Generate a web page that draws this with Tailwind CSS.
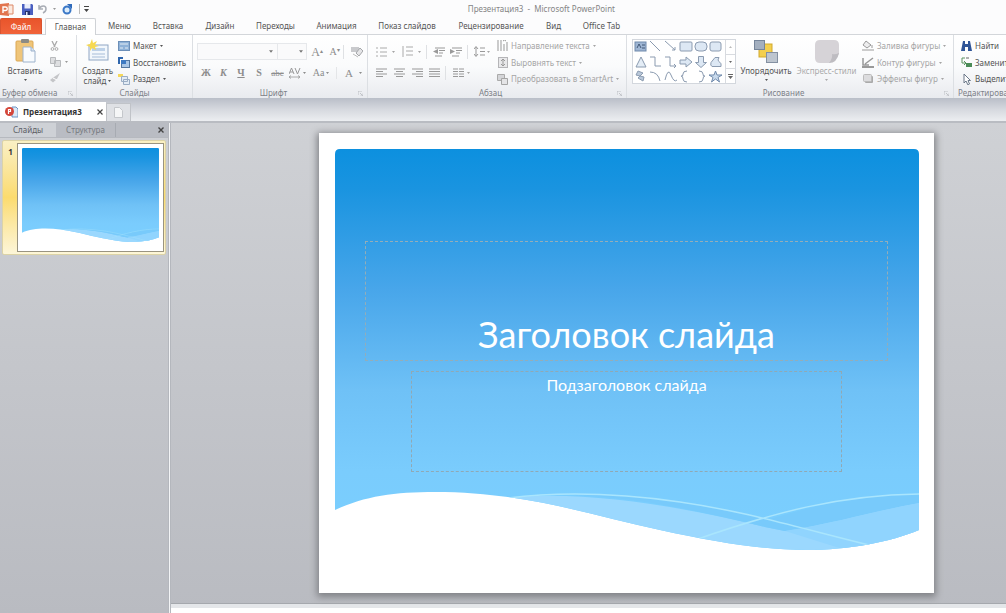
<!DOCTYPE html>
<html lang="ru">
<head>
<meta charset="utf-8">
<title>Презентация3 - Microsoft PowerPoint</title>
<script src="https://cdn.jsdelivr.net/npm/@tailwindcss/browser@4"></script>
</head>
<body class="min-h-screen flex flex-col overflow-x-hidden bg-[#c5c8ce] font-['Noto_Sans',sans-serif] text-[8px] leading-[10px] text-[#555]">

<header class="bg-[#fcfcfd]">
  <div class="flex h-[18px] items-center">
    <div class="flex flex-1 items-center">
      <svg class="h-[13px] w-[14px]" viewBox="0 0 14 13"><path d="M0 1l9-1v13l-9-1z" fill="#e2744e"/><path d="M8 2h5v9H8z" fill="#fbe9df" stroke="#dc8868"/><path d="M3 10V4h2.500a1.700 1.700 0 010 3.500H3" fill="none" stroke="#fff" stroke-width="1.400"/></svg>
      <button class="ml-[8px]" aria-label="Сохранить"><svg class="size-[11px]" viewBox="0 0 11 11"><path d="M0 0h10l1 1v10H0z" fill="#4a5fc0"/><path d="M2.500 0h6v4.500h-6z" fill="#e9edfa"/><path d="M3 7h5v4H3z" fill="#26336f"/><path d="M4 8h1.500v3H4z" fill="#dfe5f7"/></svg></button>
      <button class="ml-[5px] flex items-center gap-[5px]" aria-label="Отменить"><svg class="size-[10px]" viewBox="0 0 10 10"><path d="M1 1v4h4M1 5c2-4 7-4 7 0 0 2-1 3-3 4" fill="none" stroke="#a9adb5" stroke-width="1.500"/></svg><svg class="h-[2px] w-[3px]" viewBox="0 0 3 2"><path d="M0 0h3L1.500 2z" fill="#999"/></svg></button>
      <button class="ml-[6px]" aria-label="Повторить"><svg class="size-[11px]" viewBox="0 0 11 11"><circle cx="5" cy="6" r="3.500" fill="#dcecfb" stroke="#3b78c7" stroke-width="2"/><path d="M5 0h5v5z" fill="#2f6abb"/></svg></button>
      <span class="ml-[6px] h-[10px] w-px bg-[#bbb]"></span>
      <button class="ml-[4px]" aria-label="Настройка панели"><svg class="h-[6px] w-[5px]" viewBox="0 0 5 6"><path d="M0 0h5v1H0zM0 3h5L2.500 6z" fill="#444"/></svg></button>
    </div>
    <h1 class="text-[#858585]">Презентация3 &nbsp;-&nbsp; Microsoft PowerPoint</h1>
    <div class="w-[391px]"></div>
  </div>
  <nav class="flex h-[17px] items-stretch whitespace-nowrap border-b border-[#d3d6da]">
    <button class="w-[42px] rounded-t-[2px] border border-b-0 border-[#d9532f] bg-linear-to-b from-[#e9552b] to-[#f0633a] text-white">Файл</button>
    <button class="-mb-px ml-[3px] mr-[2px] w-[51px] rounded-t-[2px] border border-b-0 border-[#cfd2d6] bg-white">Главная</button>
    <button class="w-[43px]">Меню</button>
    <button class="w-[54px]">Вставка</button>
    <button class="w-[50px]">Дизайн</button>
    <button class="w-[61px]">Переходы</button>
    <button class="w-[61px]">Анимация</button>
    <button class="w-[80px]">Показ слайдов</button>
    <button class="w-[88px]">Рецензирование</button>
    <button class="w-[37px]">Вид</button>
    <button class="w-[59px]">Office Tab</button>
  </nav>
</header>

<svg class="hidden">
  <symbol id="dd" viewBox="0 0 3 2"><path d="M0 0h3L1.500 2z" fill="currentColor"/></symbol>
  <symbol id="launch" viewBox="0 0 5 5"><path d="M0 4V0h4M2 2l2.500 2.500M5 2.500V5H2.500" fill="none" stroke="#b5b8bd" stroke-width=".8"/></symbol>
</svg>

<section class="flex h-[63px] overflow-hidden whitespace-nowrap bg-linear-to-b from-white via-[#fafbfc] to-[#e9ebef]" aria-label="Лента">
  <div class="flex w-[77px] shrink-0 flex-col border-r border-[#dcdfe3] pt-[2px]">
    <div class="flex h-[51px]">
      <button class="flex w-[50px] flex-col items-center">
        <svg class="mt-[2px] h-[24px] w-[21px]" viewBox="0 0 21 24"><rect x="1" y="2" width="17" height="20" rx="1" fill="#efc579" stroke="#dca854"/><rect x="6" y="0" width="8" height="4" rx="1" fill="#8b8b85"/><path d="M8 8h8l4 4v11H8z" fill="#f8fbfe" stroke="#9db2cc"/><path d="M16 8v4h4" fill="#d7e3f0" stroke="#9db2cc"/></svg>
        <span class="mt-[3px]">Вставить</span>
        <svg class="mt-[3px] h-[2px] w-[3px]"><use href="#dd"/></svg>
      </button>
      <div class="flex flex-col text-[#999]">
        <button class="flex h-[17px] items-center" aria-label="Вырезать"><svg class="h-[10px] w-[9px]" viewBox="0 0 9 10"><path d="M2 0l3 6M7 0L4 6" stroke="#aaa" stroke-width="1.300"/><circle cx="2.500" cy="8" r="1.400" fill="none" stroke="#aaa"/><circle cx="6.500" cy="8" r="1.400" fill="none" stroke="#aaa"/></svg></button>
        <button class="flex h-[16px] items-center gap-[4px]" aria-label="Копировать"><svg class="h-[10px] w-[11px]" viewBox="0 0 11 10"><path d="M.5.5h5v6h-5zM4.500 3.500h6v6h-6z" fill="#dedfe1" stroke="#b8babd"/></svg><svg class="h-[2px] w-[3px]"><use href="#dd"/></svg></button>
        <button class="flex h-[16px] items-center" aria-label="Формат по образцу"><svg class="h-[10px] w-[11px]" viewBox="0 0 11 10"><path d="M10 0L7 6 3 9.500 0 7l4-3z" fill="#c4c5c8"/><path d="M3 5l4 2" stroke="#fff"/></svg></button>
      </div>
    </div>
    <div class="flex items-center justify-between pl-[2px] pr-[3px] text-[#7d8188]"><span>Буфер обмена</span><svg class="size-[5px]"><use href="#launch"/></svg></div>
  </div>

  <div class="flex w-[116px] shrink-0 flex-col border-r border-[#dcdfe3] pt-[2px]">
    <div class="flex h-[51px]">
      <button class="flex w-[41px] flex-col items-center">
        <svg class="mt-[2px] h-[24px] w-[24px]" viewBox="0 0 24 24"><rect x="3" y="6" width="19" height="15" fill="#f2f7fc" stroke="#8fa6c4"/><path d="M6 9h13v3H6z" fill="#bdd1e8"/><path d="M6 15h13M6 18h13" stroke="#a7bdd8"/><path d="M6 0l1 4 4-2-2 4 4 1-4 1 1 3-4-2-2 3V8L0 6l4-1z" fill="#f7d951"/></svg>
        <span class="mt-[3px]">Создать</span>
        <span class="flex items-center gap-[2px]">слайд<svg class="h-[2px] w-[3px]"><use href="#dd"/></svg></span>
      </button>
      <div class="flex flex-col">
        <button class="flex h-[17px] items-center gap-[3px]"><svg class="h-[10px] w-[12px]" viewBox="0 0 12 10"><rect x=".5" y=".5" width="11" height="9" fill="#8fb2d8" stroke="#6c8fb8"/><path d="M2 2h8v2H2zM2 6h3v2H2zM7 6h3v2H7z" fill="#b9cfe6"/></svg>Макет<svg class="h-[2px] w-[3px]"><use href="#dd"/></svg></button>
        <button class="flex h-[17px] items-center gap-[3px]"><svg class="h-[11px] w-[12px]" viewBox="0 0 12 11"><rect x="3.500" y="3.500" width="8" height="7" fill="#a9c6e6" stroke="#54779f"/><path d="M0 0h5v2H2v5H0z" fill="#2f66ad"/><path d="M3 3h5v4H3z" fill="#3e7ac2"/></svg>Восстановить</button>
        <button class="flex h-[16px] items-center gap-[3px]"><svg class="h-[11px] w-[12px]" viewBox="0 0 12 11"><path d="M0 0h5v3H0z" fill="#f5d85b"/><path d="M3.500 2.500h6v5h-6zM5.500 5.500h6v5h-6z" fill="#e3ebf4" stroke="#9badc4"/></svg>Раздел<svg class="h-[2px] w-[3px]"><use href="#dd"/></svg></button>
      </div>
    </div>
    <div class="text-center text-[#7d8188]">Слайды</div>
  </div>

  <div class="flex w-[175px] shrink-0 flex-col border-r border-[#dcdfe3] pt-[2px]">
    <div class="flex h-[51px] flex-col gap-[4px] pl-[4px] pt-[6px] text-[#8d8d8d]">
      <div class="flex h-[17px] items-center">
        <div class="flex h-full w-[81px] items-center border border-[#e6e8eb] bg-[#fafafb] pr-[4px]"><select aria-label="Шрифт" class="h-full min-w-0 flex-1 appearance-none"><option></option></select><svg class="h-[3px] w-[4px]" viewBox="0 0 3 2"><path d="M0 0h3L1.500 2z" fill="#777"/></svg></div>
        <div class="flex h-full w-[29px] items-center border border-l-0 border-[#e6e8eb] bg-[#fafafb] pr-[3px]"><select aria-label="Размер" class="h-full min-w-0 flex-1 appearance-none"><option></option></select><svg class="h-[3px] w-[4px]" viewBox="0 0 3 2"><path d="M0 0h3L1.500 2z" fill="#777"/></svg></div>
        <button class="ml-[4px] w-[12px] font-['Liberation_Serif',serif] text-[12px]" aria-label="Увеличить шрифт">A<sup class="text-[6px]">▴</sup></button>
        <button class="ml-[6px] w-[11px] font-['Liberation_Serif',serif] text-[10px]" aria-label="Уменьшить шрифт">A<sup class="text-[6px]">▾</sup></button>
        <span class="ml-[3px] h-[14px] w-px bg-[#dfe1e4]"></span>
        <button class="ml-[7px]" aria-label="Очистить формат"><svg class="h-[12px] w-[12px]" viewBox="0 0 12 12"><path d="M0 1h8v5H0z" fill="#c9cacd"/><path d="M5 7l4-5 3 3-4 5z" fill="#e5e5e7" stroke="#a4a6a9"/><path d="M2 8l5 3" stroke="#bbb"/></svg></button>
      </div>
      <div class="flex h-[17px] items-center font-['Liberation_Serif',serif] text-[10px]">
        <button class="w-[18px] font-bold">Ж</button>
        <button class="w-[17px] font-bold italic">К</button>
        <button class="w-[18px] font-bold underline">Ч</button>
        <button class="w-[18px] font-bold">S</button>
        <button class="w-[19px] text-[9px] line-through">abc</button>
        <button class="flex w-[21px] items-center justify-center gap-[2px]" aria-label="Интервал"><svg class="h-[12px] w-[12px]" viewBox="0 0 12 12"><path d="M0 7l2.500-6L5 7M1 5h3M6 1l2.500 6L11 1" fill="none" stroke="#999"/><path d="M0 10h11M2 8.500L0 10l2 1.500M9 8.500l2 1.500-2 1.500" fill="none" stroke="#999" stroke-width=".8"/></svg><svg class="h-[2px] w-[3px]"><use href="#dd"/></svg></button>
        <button class="flex w-[26px] items-center justify-center gap-[2px]">Aa<svg class="h-[2px] w-[3px]"><use href="#dd"/></svg></button>
        <span class="ml-[2px] h-[12px] w-px bg-[#e4e6e8]"></span>
        <button class="ml-[8px] flex items-center gap-[6px] text-[11px]">A<svg class="h-[2px] w-[3px]"><use href="#dd"/></svg></button>
      </div>
    </div>
    <div class="flex items-center pr-[4px] text-[#7d8188]"><span class="flex-1 pr-[4px] text-center">Шрифт</span><svg class="size-[5px]"><use href="#launch"/></svg></div>
  </div>

  <div class="flex w-[259px] shrink-0 flex-col border-r border-[#dcdfe3] pt-[2px]">
    <div class="flex h-[51px] text-[#a5a5a5]">
      <div class="flex w-[129px] flex-col gap-[4px] pl-[8px] pt-[6px]">
        <div class="flex h-[17px] items-center">
          <button class="flex w-[26px] items-center gap-[5px]" aria-label="Маркеры"><svg class="h-[10px] w-[11px]" viewBox="0 0 11 10"><path d="M0 1h2M0 5h2M0 9h2M4 1h7M4 5h7M4 9h7" stroke="#aaa"/></svg><svg class="h-[2px] w-[3px]"><use href="#dd"/></svg></button>
          <button class="flex w-[24px] items-center gap-[5px]" aria-label="Нумерация"><svg class="h-[11px] w-[11px]" viewBox="0 0 11 11"><path d="M1 0v11M4 1h7M4 5h7M4 9h7" stroke="#aaa"/></svg><svg class="h-[2px] w-[3px]"><use href="#dd"/></svg></button>
          <span class="h-[14px] w-px bg-[#dfe1e4]"></span>
          <button class="ml-[6px]" aria-label="Уменьшить отступ"><svg class="h-[10px] w-[12px]" viewBox="0 0 12 10"><path d="M2 1h10M6 3.500h6M6 6h4M2 9h7" stroke="#999"/><path d="M5 2v5L0 4.500z" fill="#999"/></svg></button>
          <button class="ml-[5px]" aria-label="Увеличить отступ"><svg class="h-[10px] w-[12px]" viewBox="0 0 12 10"><path d="M2 1h10M6 3.500h6M6 6h4M2 9h7" stroke="#999"/><path d="M0 2v5l5-2.500z" fill="#999"/></svg></button>
          <span class="ml-[5px] h-[14px] w-px bg-[#dfe1e4]"></span>
          <button class="ml-[6px] flex items-center gap-[2px]" aria-label="Междустрочный интервал"><svg class="h-[11px] w-[11px]" viewBox="0 0 11 11"><path d="M2 1v9M0 3l2-2.500L4 3M0 8l2 2.500L4 8M6 2h5M6 5.500h5M6 9h5" fill="none" stroke="#999"/></svg><svg class="h-[2px] w-[3px]"><use href="#dd"/></svg></button>
        </div>
        <div class="flex h-[17px] items-center">
          <button class="w-[18px]" aria-label="По левому краю"><svg class="h-[9px] w-[11px]" viewBox="0 0 11 9"><path d="M0 1h11M0 3.500h7M0 6h11M0 8.500h7" stroke="#999"/></svg></button>
          <button class="w-[18px]" aria-label="По центру"><svg class="h-[9px] w-[11px]" viewBox="0 0 11 9"><path d="M0 1h11M2 3.500h7M0 6h11M2 8.500h7" stroke="#999"/></svg></button>
          <button class="w-[17px]" aria-label="По правому краю"><svg class="h-[9px] w-[11px]" viewBox="0 0 11 9"><path d="M0 1h11M4 3.500h7M0 6h11M4 8.500h7" stroke="#999"/></svg></button>
          <button class="w-[16px]" aria-label="По ширине"><svg class="h-[9px] w-[11px]" viewBox="0 0 11 9"><path d="M0 1h11M0 3.500h11M0 6h11M0 8.500h11" stroke="#999"/></svg></button>
          <span class="h-[14px] w-px bg-[#dfe1e4]"></span>
          <button class="ml-[7px] flex items-center gap-[3px]" aria-label="Колонки"><svg class="h-[9px] w-[11px]" viewBox="0 0 11 9"><path d="M0 1h5M0 3.500h5M0 6h5M0 8.500h5M6 1h5M6 3.500h5M6 6h5M6 8.500h5" stroke="#999"/></svg><svg class="h-[2px] w-[3px]"><use href="#dd"/></svg></button>
        </div>
      </div>
      <div class="flex flex-col">
        <button class="flex h-[17px] items-center gap-[3px]"><svg class="h-[11px] w-[11px]" viewBox="0 0 11 11"><path d="M1 0v11M4 0v11M7 4v7M10 2v9M6 1l1.500-1L9 1" fill="none" stroke="#999"/></svg>Направление текста<svg class="h-[2px] w-[3px]"><use href="#dd"/></svg></button>
        <button class="flex h-[17px] items-center gap-[3px]"><svg class="h-[11px] w-[11px]" viewBox="0 0 11 11"><rect x="1.500" y=".5" width="9" height="10" fill="#e8e8ea" stroke="#b5b5b8"/><path d="M6 2v7M4 4l2-2 2 2M4 7l2 2 2-2" fill="none" stroke="#999"/></svg>Выровнять текст<svg class="h-[2px] w-[3px]"><use href="#dd"/></svg></button>
        <button class="flex h-[16px] items-center gap-[3px]"><svg class="h-[11px] w-[11px]" viewBox="0 0 11 11"><path d="M.5.5h7v6h-7z" fill="#d4d5d8" stroke="#aaa"/><path d="M4.500 4.500h6v6h-6z" fill="#e4e4e6" stroke="#a5a5a5"/></svg>Преобразовать в SmartArt<svg class="h-[2px] w-[3px]"><use href="#dd"/></svg></button>
      </div>
    </div>
    <div class="flex items-center pr-[4px] text-[#7d8188]"><span class="flex-1 pr-[4px] text-center">Абзац</span><svg class="size-[5px]"><use href="#launch"/></svg></div>
  </div>

  <div class="flex w-[327px] shrink-0 flex-col border-r border-[#dcdfe3] pt-[2px]">
    <div class="flex h-[51px]">
      <div class="ml-[5px] mt-[2px] flex h-[45px] border border-[#d3d7dd] bg-white">
        <svg class="h-[43px] w-[92px]" viewBox="0 0 92 43" fill="none" stroke="#8b9bb0"><rect x="2" y="2" width="11" height="9" fill="#9fb6d4" stroke="#6f89ab"/><path d="M4 8l2-4 2 4M9 5h3M9 8h3" stroke="#29405e" stroke-width=".8"/><path d="M17 1l10 10M32 1l10 9M42 7v3h-3"/><rect x="47" y="2" width="12" height="9" rx="1" fill="#dde8f4"/><rect x="62" y="2" width="12" height="9" rx="4" fill="#dde8f4"/><rect x="77" y="2" width="11" height="9" rx="2" fill="#dde8f4"/><path d="M8 17l5 10H3z" fill="#e4edf6"/><path d="M17 17h5v9h6M32 17h5v9h6M41 24l2 2-2 2"/><path d="M47 20h6v-3l6 5-6 5v-3h-6z" fill="#dde8f4"/><path d="M65.500 16.500h5v6h3l-5.500 5-5.500-5h3z" fill="#dde8f4"/><path d="M79 26.500q-2-1-1-4l4-5h4q-2 3 0 4 3 2 2 5z" fill="#dde8f4"/><path d="M5 31l5 2-3 3 4 1-1 4-5-3 2-2-4-1z" fill="#b9c8da"/><path d="M17 32q8 0 10 9M32 40q3-13 6-5t6 5M54 31q-4 0-4 3t-2 2q2 0 2 3t4 3M66 31q4 0 4 3t2 2q-2 0-2 3t-4 3"/><path d="M82.500 31l1.500 4h5l-4 2.500 1.500 4.500-4-3-4 3 1.500-4.500-4-2.500h5z" fill="#c9daec" stroke="#6f89ab"/></svg>
        <div class="flex w-[10px] flex-col divide-y divide-[#d8dbe0] border-l border-[#d8dbe0] text-[#666]">
          <button class="flex flex-1 items-center justify-center text-[#bbb]" aria-label="Вверх"><svg class="h-[2px] w-[3px]" viewBox="0 0 3 2"><path d="M0 2h3L1.500 0z" fill="currentColor"/></svg></button>
          <button class="flex flex-1 items-center justify-center" aria-label="Вниз"><svg class="h-[2px] w-[3px]"><use href="#dd"/></svg></button>
          <button class="flex flex-1 items-center justify-center" aria-label="Все фигуры"><svg class="h-[5px] w-[5px]" viewBox="0 0 5 5"><path d="M0 0h5v1H0zM0 2h5L2.500 5z" fill="currentColor"/></svg></button>
        </div>
      </div>
      <button class="ml-[2px] flex w-[56px] flex-col items-center">
        <svg class="mt-[3px] h-[23px] w-[24px]" viewBox="0 0 24 23"><rect x="5" y="4" width="13" height="13" fill="#f3cf4e" stroke="#d1a92e"/><rect x=".5" y=".5" width="10" height="9" fill="#a3afbf" stroke="#76859a"/><rect x="12.500" y="12.500" width="11" height="10" fill="#bdc5cf" stroke="#8490a2"/></svg>
        <span class="mt-[3px]">Упорядочить</span>
        <svg class="mt-[3px] h-[2px] w-[3px]"><use href="#dd"/></svg>
      </button>
      <button class="flex w-[65px] flex-col items-center text-[#aaa]">
        <svg class="mt-[3px] h-[23px] w-[24px]" viewBox="0 0 24 23"><path d="M5 0h14q5 0 5 5v9l-9 9H5q-5 0-5-5V5q0-5 5-5z" fill="#d6d3d7"/><path d="M24 13q-4 2-7 1 1 4-3 9 8 0 10-10z" fill="#bebcc1"/></svg>
        <span class="mt-[3px]">Экспресс-стили</span>
        <svg class="mt-[3px] h-[2px] w-[3px]"><use href="#dd"/></svg>
      </button>
      <div class="ml-[3px] flex flex-col text-[#a5a5a5]">
        <button class="flex h-[17px] items-center gap-[3px]"><svg class="h-[11px] w-[12px]" viewBox="0 0 12 11"><path d="M4 1l5 4-4 3-4-3zM10 5v3" fill="#ededee" stroke="#999"/><path d="M0 9h12v2H0z" fill="#ccc"/></svg>Заливка фигуры<svg class="h-[2px] w-[3px]"><use href="#dd"/></svg></button>
        <button class="flex h-[17px] items-center gap-[3px]"><svg class="h-[11px] w-[12px]" viewBox="0 0 12 11"><path d="M1 1v7h6M3 7l8-6" fill="none" stroke="#999" stroke-width="1.500"/><path d="M0 9h12v2H0z" fill="#999"/></svg>Контур фигуры<svg class="h-[2px] w-[3px]"><use href="#dd"/></svg></button>
        <button class="flex h-[16px] items-center gap-[3px]"><svg class="h-[10px] w-[12px]" viewBox="0 0 12 10"><rect x="3" y="2" width="8" height="7" rx="1" fill="#aaa"/><rect x="1.500" y=".5" width="8" height="7" rx="1" fill="#dcdcde" stroke="#bbb"/></svg>Эффекты фигур<svg class="h-[2px] w-[3px]"><use href="#dd"/></svg></button>
      </div>
    </div>
    <div class="flex items-center pr-[4px] text-[#7d8188]"><span class="flex-1 pr-[4px] text-center">Рисование</span><svg class="size-[5px]"><use href="#launch"/></svg></div>
  </div>

  <div class="flex w-[80px] shrink-0 flex-col pt-[2px]">
    <div class="flex h-[51px] flex-col pl-[7px]">
      <button class="flex h-[17px] items-center gap-[3px]"><svg class="h-[10px] w-[11px]" viewBox="0 0 11 10"><path d="M2 0h2v3h3V0h2l2 10H7V6H4v4H0z" fill="#2f5597"/></svg>Найти</button>
      <button class="flex h-[17px] items-center gap-[3px]"><svg class="h-[11px] w-[11px]" viewBox="0 0 11 11"><path d="M4 1H1v5h3M3 4l2 2-2 2" fill="none" stroke="#5a9361"/><path d="M5 6h6v4H5z" fill="#4b8c58"/><path d="M5 1h3" stroke="#666"/></svg>Заменить</button>
      <button class="flex h-[16px] items-center gap-[3px]"><svg class="h-[11px] w-[11px]" viewBox="0 0 11 11"><path d="M3 0v9l2-2 2 4 1.500-1L7 6.500h2.500z" fill="#fff" stroke="#6a7788"/></svg>Выделить</button>
    </div>
    <div class="pl-[4px] text-[#7d8188]">Редактирование</div>
  </div>
</section>

<div class="flex h-[25px] items-end border-b-2 border-[#b9bcc2] bg-linear-to-b from-[#b9bec8] via-[#d6d9df] to-[#eceef1]">
  <div class="flex h-[19px] w-[106px] items-center bg-white pl-[5px] pr-[3px]">
    <svg class="h-[12px] w-[13px]" viewBox="0 0 13 12"><path d="M7 1h4l2 2v8H7z" fill="#dbe9f7" stroke="#6d95c4"/><circle cx="4.500" cy="5.500" r="4.500" fill="#d4463a"/><path d="M3.500 8V3.500h2v2h-2" fill="none" stroke="#fff" stroke-width="1.200"/></svg>
    <span class="ml-[5px] flex-1 font-bold text-[#333]">Презентация3</span>
    <button aria-label="Закрыть вкладку"><svg class="size-[6px]" viewBox="0 0 6 6"><path d="M.5.5l5 5M5.500.5l-5 5" stroke="#444" stroke-width="1.200"/></svg></button>
  </div>
  <button class="flex h-[18px] w-[25px] items-center justify-center border border-b-0 border-[#c0c3c8] bg-[#dfe1e5]" aria-label="Новая вкладка"><svg class="h-[11px] w-[9px]" viewBox="0 0 9 11"><path d="M.5.5h5l3 3v7h-8z" fill="#f5f6f7" stroke="#c4c7cb"/></svg></button>
</div>

<main class="flex flex-1 bg-linear-to-b from-[#cfd1d5] to-[#b9bbc1]">
  <aside class="flex w-[168px] shrink-0 flex-col">
    <div class="flex h-[15px] border-b border-[#b6b9bf] bg-[#b9bcc3] text-[#5d6066]">
      <button class="w-[56px] bg-[#ced1d6]">Слайды</button>
      <button class="w-[60px] border-r border-[#a7abb2] text-[#777a80]">Структура</button>
      <button class="ml-auto mr-[4px]" aria-label="Закрыть область"><svg class="size-[6px]" viewBox="0 0 6 6"><path d="M.5.5l5 5M5.500.5l-5 5" stroke="#444" stroke-width="1.400"/></svg></button>
    </div>
    <div class="ml-[2px] mr-[2px] mt-[2px] flex rounded-[2px] border border-[#dcd3a6] bg-linear-to-b from-[#faf0c4] via-[#fbdb6e] to-[#fdf6d8] p-[1px] pb-[2px]">
      <span class="w-[13px] pt-[5px] text-center font-bold text-[#333]">1</span>
      <div class="mt-px aspect-[147/109] flex-1 border border-[#9a9480] bg-white p-[4px]">
        <svg class="w-full" viewBox="0 0 584 402" aria-label="Миниатюра слайда"><use href="#art"/></svg>
      </div>
    </div>
  </aside>
  <div class="w-[3px] shrink-0 border-x border-[#b4b7bd] bg-[#f3f4f6]"></div>
  <div class="flex flex-1 flex-col">
    <section class="flex-1 pb-[10px] pl-[148px] pr-[72px] pt-[10px]">
      <article class="relative aspect-[615/460] w-full bg-white p-[16px] pr-[15px] shadow-[0_2px_7px_2px_#808286]">
        <svg class="w-full" viewBox="0 0 584 402">
          <defs>
            <linearGradient id="sky" x1="0" y1="0" x2="0" y2="1"><stop offset="0" stop-color="#0c90df"/><stop offset=".1" stop-color="#1a94e0"/><stop offset=".35" stop-color="#48a6ea"/><stop offset=".6" stop-color="#6fc1f6"/><stop offset=".8" stop-color="#7accfd"/><stop offset="1" stop-color="#7acffe"/></linearGradient>
            <clipPath id="wave"><path d="M0 5q0-5 5-5h574q5 0 5 5v376c-29 12-69 20-113 20-41 0-86-7-146-20-70-15-135-38-225-38-40 0-70 4-100 18z"/></clipPath>
            <g id="art" clip-path="url(#wave)">
              <path d="M0 0h584v402H0z" fill="url(#sky)"/>
              <path d="M172 349c70-8 165 6 258 29l20 4c50-8 90-20 134-28v48H172z" fill="#9bd8fe"/>
              <path d="M240 345c60 0 110 7 195 25 50-15 95-25 149-25v9c-44 8-84 20-134 28l-20-4C365 362 305 349 240 346z" fill="#78cafb"/>
              <path d="M450 382c50-8 90-20 134-28v48h-70z" fill="#90d4fe"/>
              <path d="M172 349c50-6 110-5 173 4 62 9 105 22 189 43M360 391c80-28 145-45 224-46" fill="none" stroke="#a9e5fd" stroke-width="1.500"/>
            </g>
          </defs>
          <use href="#art"/>
        </svg>
        <div class="absolute inset-0 flex flex-col items-center gap-[10px] pt-[108px] text-white">
          <h2 class="flex h-[120px] w-[85%] items-end justify-center border border-dashed border-[#93adb9] pb-[4px] font-['Lato','Noto_Sans',sans-serif] text-[36px] leading-[44px]">Заголовок слайда</h2>
          <p class="h-[101px] w-[70%] border border-dashed border-[#8fa9b5] pt-[2px] text-center font-['Lato','Noto_Sans',sans-serif] text-[16px] leading-[22px]">Подзаголовок слайда</p>
        </div>
      </article>
    </section>
    <footer class="h-[9px] border-t-4 border-[#e4e6e9] bg-white shadow-[0_-1px_0_#a5a8ad]"></footer>
  </div>
</main>
</body>
</html>
